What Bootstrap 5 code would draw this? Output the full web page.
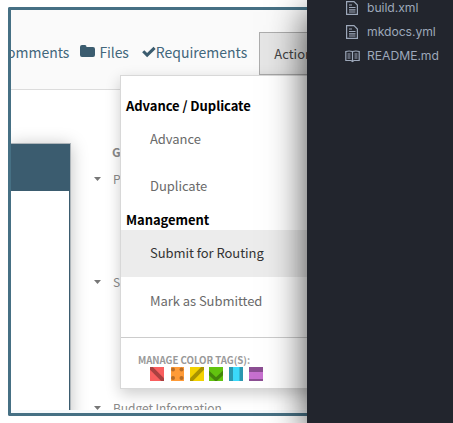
<!DOCTYPE html>
<html lang="en">
<head>
<meta charset="utf-8">
<meta name="viewport" content="width=device-width, initial-scale=1">
<title>Actions menu</title>
<link href="https://cdn.jsdelivr.net/npm/bootstrap@5.3.0/dist/css/bootstrap.min.css" rel="stylesheet">
<style>
body{width:453px;height:423px;font-family:"Noto Sans CJK SC","Noto Sans",sans-serif;font-size:14px;line-height:20px;color:#777;background:#fff}
.app-pane{width:307px;height:423px;padding:7px 0 7px 8px}
.app-frame{height:409px;border:3px solid #467084;border-right:0;border-radius:2px 0 0 2px;background:#f6f9fb;padding-bottom:3px}
.topbar{height:80px;background:#fafafa;border-bottom:1px solid #dcdcdc;color:#42677c;padding-top:22px}
.tool-links{height:38px;margin-left:-4px;padding-top:1px;white-space:nowrap}
.link-gap{margin-left:11px}.link-gap-lg{margin-left:13px}
.folder-label{margin-left:3px;letter-spacing:-.1px}
.actions-btn{width:80px;height:43px;margin-left:12px;background:#e6e6e6;border:1px solid #adadad;color:#444;padding:11px 0 0 14px;font-size:13px;line-height:20px}
.work{height:320px;background:#fff}
.side-panel{width:60px;margin-top:53px;height:280px;border-right:1px solid #aeb5ba;border-top:1px solid #aeb5ba;box-shadow:0 2px 16px rgba(0,0,0,.25);background:#fff}
.side-head{height:47px;background:#3b5c6f}
.side-body{height:232px;border-right:1px solid #3b5c6f}
.tree{padding:52px 0 0 23px;color:#8a8a8a;white-space:nowrap;font-size:12px}
.tree-row{height:20px;gap:12px;letter-spacing:-.05px}
.caret{width:7px;height:4px;fill:#777}
.tree-title{font-weight:700;font-size:12px;padding-left:18px;height:20px;margin-bottom:7px}
.gap-a{margin-bottom:83px}.gap-b{margin-bottom:106px}
.actions-menu{left:120px;top:75px;width:240px;height:314px;border:1px solid #d8d8d8;background:#fff;box-shadow:0 5px 14px rgba(0,0,0,.2);padding-top:19px;font-size:13px;letter-spacing:-.05px}
.menu-title{color:#000;font-weight:700;font-size:13px;height:20px;padding-left:5px}
.menu-title:first-child{padding-top:1px}
.menu-item{height:47.5px;padding:13.500px 0 14px 29px;color:#6a6a6a}
.menu-item.hot{background:#ececec;color:#333;height:47px;padding-top:13px}
.tags{border-top:1px solid #ccc;margin-top:12.5px;padding:15px 0 0 17px}
.tags-label{font-size:9.7px;line-height:14px;font-weight:700;color:#999}
.swatches{gap:5.800px;padding-left:12px}
.swatches svg{width:14px;height:14px}
.files-pane{width:146px;height:423px;background:#22252d;color:#9da8ba;box-shadow:0 12px 36px 0 rgba(0,0,0,.72);font-family:Inter,sans-serif;font-size:12.2px;letter-spacing:-.05px;padding-left:38px}
.file-row{height:24px;gap:7px}
.file-row:first-child{margin-top:-4px}
.file-row svg{width:15px;height:16px;fill:none;stroke:#9da8ba;stroke-width:1.2}
</style>
</head>
<body class="d-flex overflow-hidden position-relative">
<main class="app-pane flex-shrink-0">
  <div class="app-frame overflow-hidden">
    <header class="topbar d-flex align-items-start">
      <nav class="tool-links d-flex align-items-center">
        <span>omments</span>
        <span class="link-gap d-flex align-items-center"><svg width="16" height="13" viewBox="0 0 16 13"><path fill="#3b5c6f" d="M0 2Q0 0 2 0H5Q6.500 0 6.500 2H13Q15 2 15 4V10Q15 12 13 12H2Q0 12 0 10Z"/></svg><span class="folder-label">Files</span></span>
        <span class="link-gap-lg d-flex align-items-center"><svg width="14" height="12" viewBox="0 0 15 12"><path fill="none" stroke="#3b5c6f" stroke-width="3.300" d="M1.300 5.200L5.500 9.300L13.500 1.500"/></svg>Requirements</span>
      </nav>
      <div class="actions-btn flex-shrink-0">Actions</div>
    </header>
    <section class="work d-flex overflow-hidden">
      <div class="side-panel flex-shrink-0"><div class="side-head"></div><div class="side-body"></div></div>
      <div class="tree">
        <div class="tree-title">General</div>
        <div class="tree-row d-flex align-items-center gap-a"><svg class="caret" viewBox="0 0 9 5"><path d="M0 0H9L4.500 5Z"/></svg>Project</div>
        <div class="tree-row d-flex align-items-center gap-b"><svg class="caret" viewBox="0 0 9 5"><path d="M0 0H9L4.500 5Z"/></svg>Setup</div>
        <div class="tree-row d-flex align-items-center"><svg class="caret" viewBox="0 0 9 5"><path d="M0 0H9L4.500 5Z"/></svg>Budget Information</div>
      </div>
    </section>
  </div>
</main>
<div class="actions-menu position-absolute">
  <div class="menu-title">Advance / Duplicate</div>
  <div class="menu-item">Advance</div>
  <div class="menu-item">Duplicate</div>
  <div class="menu-title">Management</div>
  <div class="menu-item hot">Submit for Routing</div>
  <div class="menu-item">Mark as Submitted</div>
  <div class="tags">
    <div class="tags-label">MANAGE COLOR TAG(S):</div>
    <div class="swatches d-flex">
      <svg viewBox="0 0 14 14"><path fill="#f95e5e" d="M0 0H14V14H0Z"/><path stroke="#aa4040" stroke-width="4" d="M-1-1L15 15"/></svg>
      <svg viewBox="0 0 14 14"><path fill="#ff9b37" d="M1 0H14V14H1Z"/><g fill="#b76d27"><circle cx="3" cy="2.500" r="2"/><circle cx="11.500" cy="2.500" r="2"/><circle cx="3" cy="11" r="2"/><circle cx="11.500" cy="11" r="2"/></g></svg>
      <svg viewBox="0 0 14 14"><path fill="#f2d100" d="M0 0H14V14H0Z"/><path stroke="#a89200" stroke-width="4" d="M-1 15L15-1"/></svg>
      <svg viewBox="0 0 14 14"><path fill="#62c30f" d="M0 0H14V14H0Z"/><path fill="none" stroke="#43850b" stroke-width="3.300" d="M-1 5L7 12.500L15 5"/></svg>
      <svg viewBox="0 0 14 14"><path fill="#3bd9fb" d="M0 0H14V14H0Z"/><path fill="#2b98b0" d="M0 0H4V14H0ZM10.500 0H14V14H10.500Z"/></svg>
      <svg viewBox="0 0 14 14"><path fill="#c770cf" d="M0 0H14V14H0Z"/><path fill="#8b4e92" d="M0 0H14V5H0ZM0 12H14V14H0Z"/></svg>
    </div>
  </div>
</div>
<aside class="files-pane flex-shrink-0 position-relative z-1">
  <div class="file-row d-flex align-items-center"><svg viewBox="0 0 15 16"><path d="M1.600 1.600H9L12.400 5V14.400H1.600ZM4 5H7M4 7.500H10.500M4 9.800H10.500M4 12H10.500"/></svg>build.xml</div>
  <div class="file-row d-flex align-items-center"><svg viewBox="0 0 15 16"><path d="M1.600 1.600H9L12.400 5V14.400H1.600ZM4 5H7M4 7.500H10.500M4 9.800H10.500M4 12H10.500"/></svg>mkdocs.yml</div>
  <div class="file-row d-flex align-items-center"><svg viewBox="0 0 15 16"><path d="M.8 3.500Q4 2.500 7.500 3.500Q11 2.500 14.200 3.500V12.500H9L7.500 13.500L6 12.500H.8ZM7.500 4V13M2.500 6H5.500M2.500 8H5.500M2.500 10H5.500M9.500 6H12.500M9.500 8H12.500M9.500 10H12.500"/></svg>README.md</div>
</aside>
<script src="https://cdn.jsdelivr.net/npm/bootstrap@5.3.0/dist/js/bootstrap.bundle.min.js"></script>
</body>
</html>
